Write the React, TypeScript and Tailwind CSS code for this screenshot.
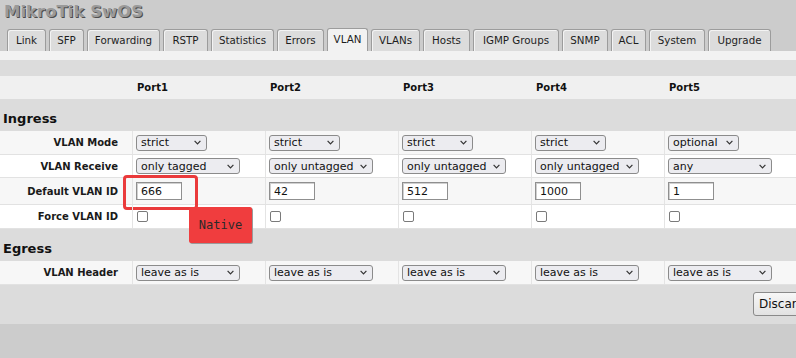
const tabs = [
  { name: "Link", w: "w-[39px]" },
  { name: "SFP", w: "w-[35px]" },
  { name: "Forwarding", w: "w-[73px]" },
  { name: "RSTP", w: "w-[45px]" },
  { name: "Statistics", w: "w-[63px]" },
  { name: "Errors", w: "w-[47px]" },
  { name: "VLAN", w: "w-[41px]", active: true },
  { name: "VLANs", w: "w-[49px]" },
  { name: "Hosts", w: "w-[47px]" },
  { name: "IGMP Groups", w: "w-[86px]" },
  { name: "SNMP", w: "w-[46px]" },
  { name: "ACL", w: "w-[35px]" },
  { name: "System", w: "w-[56px]" },
  { name: "Upgrade", w: "w-[63px]" },
]

const ports = ["Port1", "Port2", "Port3", "Port4", "Port5"]

const grid = "grid grid-cols-[132px_133px_133px_133px_133px_1fr]"

function Select({ value, w }: { value: string; w: string }) {
  return (
    <div
      className={`flex h-[16px] items-center rounded-[3px] border border-[#8b8b8b] bg-[#ececf0] pl-[4px] pr-[5px] text-[11px] leading-none text-[#111] ${w}`}
    >
      <span className="whitespace-nowrap">{value}</span>
      <svg className="ml-auto" width="7" height="5" viewBox="0 0 7 5">
        <path d="M0.6 0.8 L3.5 3.8 L6.4 0.8" fill="none" stroke="#333" strokeWidth="1.2" />
      </svg>
    </div>
  )
}

function Row({
  label,
  bg,
  h,
  children,
}: {
  label: string
  bg: string
  h: string
  children: (i: number) => React.ReactNode
}) {
  return (
    <div className={`${grid} ${h} ${bg} border-b border-[#e2e2e2]`}>
      <div className="flex items-center justify-end pr-[14px] text-[10px] font-bold text-[#1a1a1a]">
        {label}
      </div>
      {ports.map((p, i) => (
        <div key={p} className="relative flex items-center border-l border-[#e4e4e4] pl-[3px]">
          {children(i)}
        </div>
      ))}
    </div>
  )
}

function Section({ title }: { title: string }) {
  return (
    <div className="flex h-[32px] items-end bg-[#dcdcdc] pb-[4px] pl-[3px] text-[13px] font-bold leading-[16px] text-[#111]">
      {title}
    </div>
  )
}

export default function App() {
  const mode = ["strict", "strict", "strict", "strict", "optional"]
  const receive = ["only tagged", "only untagged", "only untagged", "only untagged", "any"]
  const pvid = ["666", "42", "512", "1000", "1"]

  return (
    <div className="h-[358px] w-[796px] overflow-hidden bg-[#cccccc] font-['DejaVu_Sans',sans-serif]">
      <div className="w-[831px]">
        {/* title */}
        <div className="h-[28px] pl-[4px] pt-[1px] text-[16.5px] font-bold leading-[22px] text-[#9a9a9a] [text-shadow:1px_1px_0_#4d4d4d]">
          MikroTik SwOS
        </div>

        {/* tabs */}
        <div className="flex h-[23px] items-end gap-[3px] pl-[7px]">
          {tabs.map((t) => (
            <div
              key={t.name}
              className={`flex items-center justify-center rounded-t-[3px] border border-b-0 border-[#9c9c9c] text-[10.3px] text-[#1e1e1e] ${t.w} ${
                t.active
                  ? "h-[23px] bg-[#f2f2f2]"
                  : "h-[22px] bg-[#dcdcdc] shadow-[inset_1px_1px_0_#f3f3f3]"
              }`}
            >
              {t.name}
            </div>
          ))}
        </div>

        <div className="h-[9px] bg-[#f2f2f2]" />
        <div className="h-[16px] bg-[#dcdcdc]" />

        {/* port header */}
        <div className={`${grid} h-[23px] bg-[#f0f0f0]`}>
          <div />
          {ports.map((p) => (
            <div key={p} className="flex items-center pl-[5px] text-[10px] font-bold text-[#111]">
              {p}
            </div>
          ))}
        </div>

        <Section title="Ingress" />
        <Row label="VLAN Mode" bg="bg-[#f7f7f7]" h="h-[24px]">
          {(i) => <Select value={mode[i]} w="w-[71px]" />}
        </Row>
        <Row label="VLAN Receive" bg="bg-white" h="h-[23px]">
          {(i) => <Select value={receive[i]} w="w-[104px]" />}
        </Row>
        <Row label="Default VLAN ID" bg="bg-[#f7f7f7]" h="h-[27px]">
          {(i) => (
            <>
              <input
                readOnly
                value={pvid[i]}
                className="h-[18px] w-[46px] border border-[#8f8f8f] bg-white px-[4px] text-[11px] text-[#111] shadow-[inset_1px_1px_0_#d0d0d0]"
              />
              {i === 0 && (
                <>
                  <div className="absolute left-[-10px] top-[-3px] h-[35px] w-[75px] rounded-[4px] border-[3px] border-[#ea3a3b]" />
                  <div className="absolute left-[56px] top-[29px] z-10 flex h-[36px] w-[63px] items-center justify-center rounded-[2px] bg-[#f03d3e] font-['DejaVu_Sans_Mono',monospace] text-[12px] text-[#2a2a2a] shadow-[1px_1px_0_#9a9a9a]">
                    Native
                  </div>
                </>
              )}
            </>
          )}
        </Row>
        <Row label="Force VLAN ID" bg="bg-white" h="h-[24px]">
          {() => (
            <input
              type="checkbox"
              readOnly
              className="ml-[1px] h-[11px] w-[11px] appearance-none rounded-[2px] border border-[#7a7a7a] bg-white"
            />
          )}
        </Row>

        <Section title="Egress" />
        <Row label="VLAN Header" bg="bg-[#f7f7f7]" h="h-[24px]">
          {() => <Select value="leave as is" w="w-[104px]" />}
        </Row>

        {/* footer */}
        <div className="flex h-[39px] justify-end bg-[#dcdcdc] pr-[8px] pt-[7px]">
          <button className="h-[24px] w-[70px] rounded-[3px] border border-[#8a8a8a] bg-gradient-to-b from-[#f7f7f7] to-[#e2e2e2] pl-[5px] text-left text-[12px] text-[#111]">
            Discard
          </button>
        </div>
      </div>
    </div>
  )
}
